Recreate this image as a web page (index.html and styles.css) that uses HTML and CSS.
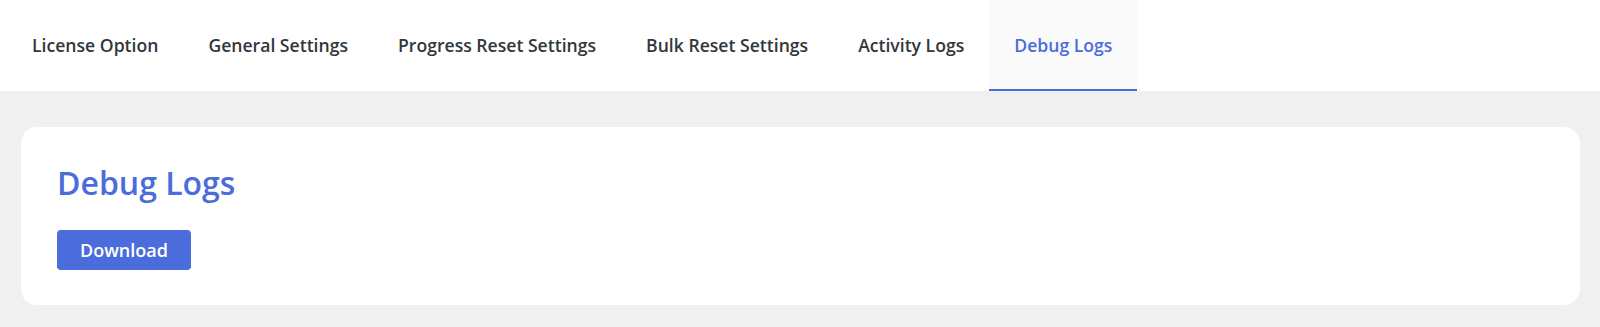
FILE: index.html
```html
<!DOCTYPE html>
<html lang="en">
<head>
    <meta charset="UTF-8">
    <meta name="viewport" content="width=device-width, initial-scale=1.0">
    <title>Debug Logs</title>
    <link rel="stylesheet" href="styles.css">
</head>
<body>
    <nav class="tabs">
        <a class="tab" href="#">License Option</a>
        <a class="tab" href="#">General Settings</a>
        <a class="tab" href="#">Progress Reset Settings</a>
        <a class="tab" href="#">Bulk Reset Settings</a>
        <a class="tab" href="#">Activity Logs</a>
        <a class="tab active" href="#">Debug Logs</a>
    </nav>
    <div class="content">
        <div class="card">
            <h1>Debug Logs</h1>
            <button type="button" class="download-btn">Download</button>
        </div>
    </div>
</body>
</html>
```

FILE: styles.css
```css
/* Mise en page générale */
body {
    margin: 0;
    background-color: #f0f0f1;
    font-family: "Open Sans", "Noto Sans", sans-serif;
    color: #2c3338;
    height: 327px;
}
.tabs {
    display: flex;
    background-color: #fff;
    height: 91px;
    padding-left: 7px;
    box-sizing: border-box;
}
.tab {
    display: flex;
    align-items: center;
    padding: 0 25px 0;
    font-size: 17.6px;
    font-weight: 600;
    color: #32373c;
    text-decoration: none;
    border-bottom: 2px solid transparent;
}
.tab.active {
    color: #4a6ddb;
    background-color: #fafafa;
    border-bottom-color: #4a6ddb;
}
.content {
    padding: 36px 20px 0 21px;
}
.card {
    background-color: #fff;
    border-radius: 16px;
    padding: 37px 36px 35px;
}
h1 {
    margin: 0 0 28px;
    font-size: 32px;
    font-weight: 600;
    color: #4a6ddb;
    line-height: 1.2;
}
.download-btn {
    display: block;
    width: 134px;
    height: 40px;
    border: none;
    border-radius: 4px;
    background-color: #4a6ddb;
    color: #fff;
    font-family: inherit;
    font-size: 18px;
    font-weight: 600;
    cursor: pointer;
}
```
